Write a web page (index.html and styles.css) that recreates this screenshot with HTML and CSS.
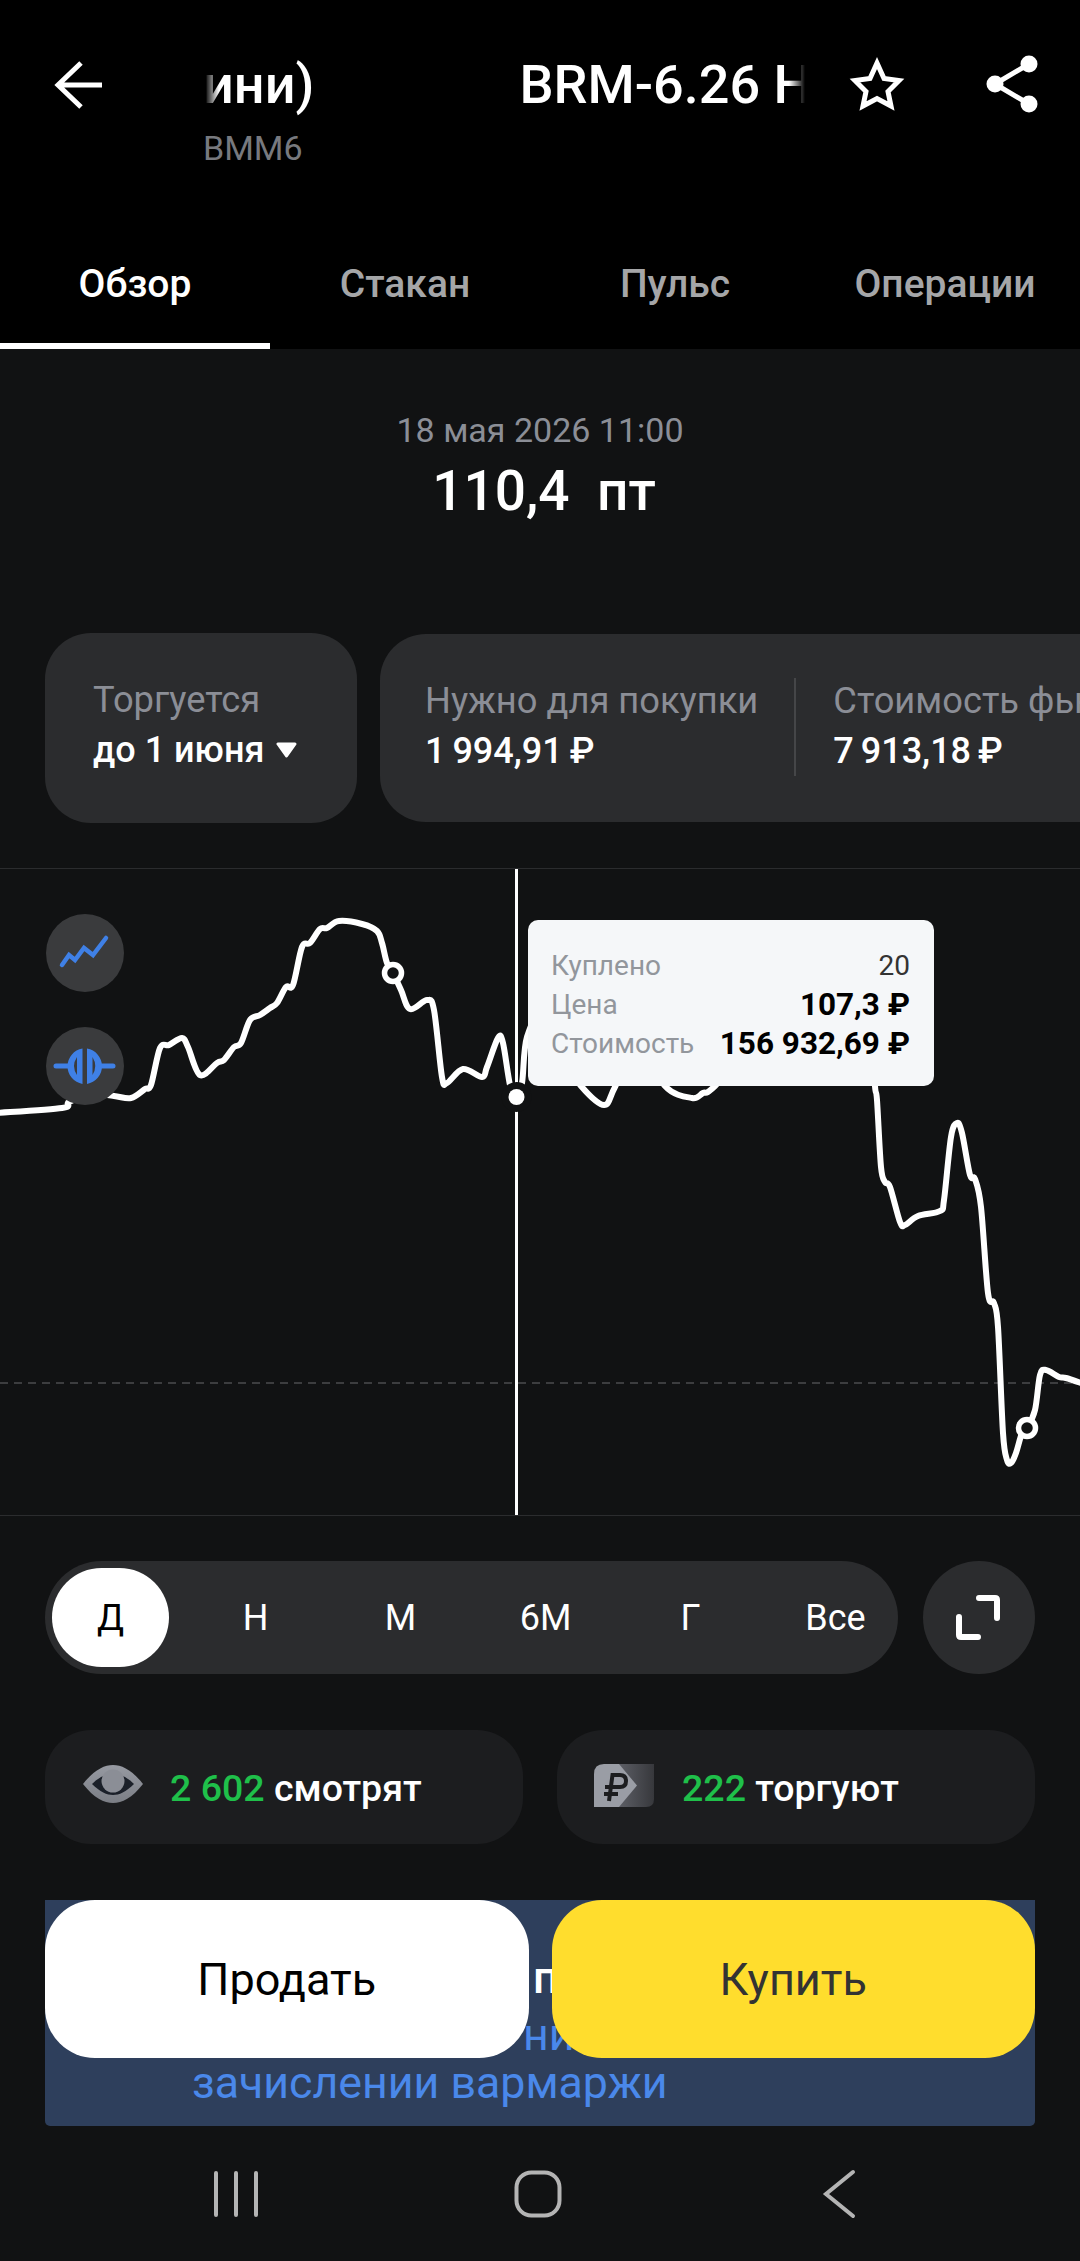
FILE: index.html
```html
<!DOCTYPE html>
<html lang="ru">
<head>
  <meta charset="UTF-8">
  <meta name="viewport" content="width=device-width, initial-scale=1.0">
  <title>BRM-6.26</title>
  <link rel="stylesheet" href="styles.css">
</head>
<body>
  <header class="top">
    <div class="title-row">
      <svg class="icon-back" viewBox="45 55 70 60"><path d="M102 85H58M81 63 58 85l23 22" /></svg>
      <div class="title-col">
        <div class="title-clip"><span class="title-prev">ини)</span><span>BRM-6.26 Н</span></div>
        <div class="ticker">BMM6</div>
      </div>
      <svg class="icon-star" viewBox="842 50 70 70"><path d="M877 63 884 78.500 899 80.500 888 91.500 891 106 877 98.500 863 106 866 91.500 855 80.500 870 78.500Z" /></svg>
      <svg class="icon-share" viewBox="980 50 65 70">
        <path d="M1029 64 995 84 1029 104" />
        <circle cx="1029" cy="64" r="8.500" /><circle cx="995" cy="84" r="8.500" /><circle cx="1029" cy="104" r="8.500" />
      </svg>
    </div>
    <nav class="tabs">
      <div class="tab active">Обзор</div>
      <div class="tab">Стакан</div>
      <div class="tab">Пульс</div>
      <div class="tab">Операции</div>
    </nav>
  </header>

  <section class="quote">
    <div class="quote-date">18 мая 2026 11:00</div>
    <div class="quote-price">110,4&nbsp; пт</div>
  </section>

  <section class="cards">
    <div class="card card-short">
      <div class="card-label">Торгуется</div>
      <div class="card-value">до 1 июня
        <svg class="caret" viewBox="0 0 21 16"><path d="M2 2H19L10.500 14Z" /></svg>
      </div>
    </div>
    <div class="card card-long">
      <div class="card-col">
        <div class="card-label">Нужно для покупки</div>
        <div class="card-value">1 994,91 ₽</div>
      </div>
      <div class="card-col card-col-last">
        <div class="card-label">Стоимость фьючерса</div>
        <div class="card-value">7 913,18 ₽</div>
      </div>
    </div>
  </section>

  <section class="chart">
    <svg class="chart-svg" viewBox="0 869 1080 646">
      <line class="chart-level" x1="0" y1="1383" x2="1080" y2="1383" />
      <path id="chart-line" class="chart-line" d="" />
      <line class="chart-cross" x1="516.500" y1="869" x2="516.500" y2="1515" />
      <circle class="chart-gap" cx="516.500" cy="1097" r="15" />
      <circle class="chart-dot" cx="516.500" cy="1097" r="8" />
      <circle class="chart-mark" cx="393" cy="973" r="8.500" />
      <circle class="chart-mark" cx="1027" cy="1428" r="8.500" />
    </svg>
    <button class="chart-btn chart-btn-line">
      <svg viewBox="0 0 78 78"><path d="M16 51 23 41 29 46 38 34 47 41 60 24" /></svg>
    </button>
    <button class="chart-btn chart-btn-marks">
      <svg viewBox="0 0 78 78">
        <path class="marks-stem" d="M10 39H22M56 39H67" />
        <path fill-rule="evenodd" d="M36.500 21.500A18 18 0 0 0 36.500 57ZM31 30Q25 39 31 48Z" />
        <path fill-rule="evenodd" d="M41 21.500A18 18 0 0 1 41 57ZM46.500 30Q52 39 46.500 48Z" />
      </svg>
    </button>
    <div class="tooltip">
      <div class="tip-label">Куплено</div><div class="tip-count">20</div>
      <div class="tip-label">Цена</div><div class="tip-value">107,3 ₽</div>
      <div class="tip-label">Стоимость</div><div class="tip-value">156 932,69 ₽</div>
    </div>
  </section>

  <section class="periods">
    <div class="period-bar">
      <div class="period active">Д</div>
      <div class="period">Н</div>
      <div class="period">М</div>
      <div class="period">6М</div>
      <div class="period">Г</div>
      <div class="period">Все</div>
    </div>
    <button class="expand">
      <svg viewBox="0 0 112 113"><path d="M56 37H72Q74 37 74 39V57M36 56V74Q36 76 38 76H55" /></svg>
    </button>
  </section>

  <section class="stats">
    <div class="stat">
      <svg class="icon-eye" viewBox="0 0 62 38">
        <defs>
          <linearGradient id="eye-fill" x1="0" y1="0" x2="0" y2="1">
            <stop offset="0" stop-color="#979aa2" />
            <stop offset="1" stop-color="#7b7e85" />
          </linearGradient>
        </defs>
        <path fill="url(#eye-fill)" d="M1 19C12 5 22 0 31 0S50 5 61 19C50 33 40 38 31 38S12 33 1 19Z" />
        <path fill="#1b2029" d="M10 19C18 11 25 9 31 9S44 11 52 19C44 27 37 30 31 30S18 27 10 19Z" />
        <circle fill="#8b8e96" cx="31" cy="16" r="11.500" />
      </svg>
      <span class="stat-text"><span class="stat-num">2 602</span> смотрят</span>
    </div>
    <div class="stat stat-trade">
      <svg class="icon-ruble" viewBox="0 0 60 43">
        <defs>
          <linearGradient id="tag-fill" x1="0" y1="0" x2="1" y2="0">
            <stop offset="0.400" stop-color="#5d5f66" />
            <stop offset="1" stop-color="#37383c" />
          </linearGradient>
        </defs>
        <path fill="url(#tag-fill)" d="M10 0H60V35Q60 43 52 43H0Z" />
        <path fill="#9a9da5" d="M10 0H25L43 21.500 25 43H0V10Q0 0 10 0Z" />
        <path class="ruble-mark" d="M15 37 18.500 11H26Q32 11 32 17T26 23H11M10 30H24" />
      </svg>
      <span class="stat-text"><span class="stat-num">222</span> торгуют</span>
    </div>
  </section>

  <section class="banner">
    <div class="banner-title">п</div>
    <div class="banner-link banner-link-tail">ни</div>
    <div class="banner-link">зачислении вармаржи</div>
    <div class="actions">
      <button class="action action-sell">Продать</button>
      <button class="action action-buy">Купить</button>
    </div>
  </section>

  <nav class="system-nav">
    <svg viewBox="0 0 60 50"><path d="M10 4V46M30 4V46M50 4V46" /></svg>
    <svg viewBox="0 0 60 50"><rect x="8.500" y="3.500" width="43" height="43" rx="15" /></svg>
    <svg viewBox="0 0 60 50"><path d="M43 3 16 25 43 47" /></svg>
  </nav>

  <script src="chart.js"></script>
</body>
</html>
```

FILE: styles.css
```css
* {
  box-sizing: border-box;
}

body {
  margin: 0;
  width: 1080px;
  height: 2261px;
  overflow: hidden;
  background-color: #111213;
  color: #fff;
  font-family: Roboto, "Noto Sans", sans-serif;
}

button {
  border: none;
  padding: 0;
  font-family: inherit;
}

svg {
  display: block;
}

/* header */
.top {
  background-color: #000;
  height: 349px;
  display: flex;
  flex-direction: column;
  justify-content: space-between;
}

.title-row {
  display: flex;
  align-items: flex-start;
  padding: 50px 0 0 45px;
}

.icon-back {
  width: 70px;
  height: 60px;
  margin-top: 5px;
  fill: none;
  stroke: #fff;
  stroke-width: 5;
}

.title-col {
  width: 600px;
  margin-left: 90px;
}

.title-clip {
  display: flex;
  gap: 205px;
  overflow: hidden;
  white-space: nowrap;
  font-size: 54px;
  font-weight: 500;
  line-height: 70px;
  mask-image: linear-gradient(90deg, transparent 0, #000 14px, #000 584px, transparent 600px);
}

.title-prev {
  margin-left: -2px;
}

.ticker {
  margin: 8px 0 0 -2px;
  font-size: 34px;
  line-height: 40px;
  color: #77797e;
}

.icon-star {
  width: 70px;
  height: 70px;
  margin-left: 37px;
  fill: none;
  stroke: #fff;
  stroke-width: 5;
}

.icon-share {
  width: 65px;
  height: 70px;
  margin-left: 68px;
  fill: #fff;
  stroke: #fff;
  stroke-width: 5;
}

.icon-share path {
  fill: none;
}

.icon-share circle {
  stroke: none;
}

.tabs {
  display: grid;
  grid-template-columns: repeat(4, 270px);
}

.tab {
  height: 115px;
  padding-bottom: 9px;
  border-bottom: 6px solid transparent;
  display: flex;
  align-items: center;
  justify-content: center;
  font-size: 39px;
  font-weight: 500;
  color: #a5a6a8;
}

.tab.active {
  color: #fff;
  border-bottom-color: #fff;
}

/* price */
.quote {
  height: 284px;
  padding-top: 63px;
  text-align: center;
}

.quote-date {
  font-size: 34px;
  line-height: 36px;
  color: #8b8e96;
}

.quote-price {
  margin: 8px 0 0 8px;
  font-size: 55px;
  font-weight: 500;
  line-height: 70px;
}

/* info cards */
.cards {
  display: flex;
  align-items: center;
  gap: 23px;
  height: 190px;
  padding-left: 45px;
  overflow: hidden;
}

.card {
  background-color: #2b2c2e;
  border-radius: 46px;
  flex-shrink: 0;
}

.card-short {
  width: 312px;
  height: 190px;
  padding: 44px 0 0 48px;
}

.card-long {
  display: flex;
  height: 188px;
  padding: 44px 0 0 45px;
  border-radius: 46px 0 0 46px;
}

.card-col {
  padding-right: 36px;
  height: 98px;
  white-space: nowrap;
}

.card-col-last {
  padding-left: 37px;
  border-left: 2px solid #454648;
}

.card-label {
  font-size: 36.300px;
  line-height: 46px;
  color: #8b8e96;
}

.card-value {
  display: flex;
  align-items: center;
  gap: 12px;
  margin-top: 4px;
  font-size: 36px;
  font-weight: 500;
  line-height: 46px;
}

.card-long .card-value {
  word-spacing: -2px;
}

.caret {
  width: 21px;
  height: 16px;
  fill: #fff;
  stroke: #fff;
  stroke-width: 3;
  stroke-linejoin: round;
}

/* chart */
.chart {
  position: relative;
  margin-top: 45px;
  border-top: 1px solid #2b2c2e;
  border-bottom: 1px solid #2b2c2e;
}

.chart-svg {
  width: 1080px;
  height: 646px;
}

.chart-level {
  stroke: #3c3d3f;
  stroke-width: 2;
  stroke-dasharray: 8 6;
}

.chart-line {
  fill: none;
  stroke: #fff;
  stroke-width: 6;
  stroke-linejoin: round;
  stroke-linecap: round;
}

.chart-cross {
  stroke: #fff;
  stroke-width: 3;
}

.chart-gap {
  fill: #111213;
}

.chart-dot {
  fill: #fff;
}

.chart-mark {
  fill: #111213;
  stroke: #fff;
  stroke-width: 5.500;
}

.chart-btn {
  position: absolute;
  left: 46px;
  width: 78px;
  height: 78px;
  border-radius: 50%;
  background-color: #3a3b3d;
}

.chart-btn-line {
  top: 45px;
}

.chart-btn-marks {
  top: 158px;
}

.chart-btn path {
  fill: #3f80e6;
}

.chart-btn-line path {
  fill: none;
  stroke: #3f80e6;
  stroke-width: 4.500;
  stroke-linecap: round;
}

.chart-btn .marks-stem {
  fill: none;
  stroke: #3f80e6;
  stroke-width: 5;
  stroke-linecap: round;
}

.tooltip {
  position: absolute;
  left: 528px;
  top: 51px;
  width: 406px;
  height: 166px;
  padding: 26px 24px 0 23px;
  border-radius: 10px;
  background-color: #f5f7f9;
  display: grid;
  grid-template-columns: auto 1fr;
  grid-auto-rows: 39px;
  align-items: center;
  font-size: 28px;
}

.tip-label {
  color: #92969c;
}

.tip-count {
  text-align: right;
  color: #333;
}

.tip-value {
  text-align: right;
  color: #000;
  font-size: 31.500px;
  font-weight: 700;
}

/* period switch */
.periods {
  display: flex;
  gap: 25px;
  margin: 45px 45px 0;
}

.period-bar {
  width: 853px;
  height: 113px;
  padding: 7px 4px 7px 7px;
  border-radius: 57px;
  background-color: #2b2c2e;
  display: grid;
  grid-template-columns: repeat(6, 117px);
  gap: 28px;
}

.period {
  display: flex;
  align-items: center;
  justify-content: center;
  border-radius: 50px;
  font-size: 36px;
}

.period.active {
  background-color: #fff;
  color: #000;
}

.expand {
  width: 112px;
  height: 113px;
  border-radius: 50%;
  background-color: #2b2c2e;
}

.expand path {
  fill: none;
  stroke: #fff;
  stroke-width: 6;
  stroke-linecap: round;
}

/* who is watching */
.stats {
  display: flex;
  gap: 34px;
  margin: 56px 45px 0;
}

.stat {
  flex: 1;
  height: 114px;
  padding-left: 37px;
  border-radius: 46px;
  background-color: #1c1d1f;
  display: flex;
  align-items: center;
  gap: 26px;
  font-size: 37.500px;
  font-weight: 500;
}

.stat-trade {
  gap: 28px;
}

.stat-text {
  margin-top: 2px;
}

.stat-num {
  color: #1fc04a;
}

.icon-eye {
  width: 62px;
  height: 38px;
  margin-top: -6px;
}

.icon-ruble {
  width: 60px;
  height: 43px;
  margin-top: -4px;
}

.ruble-mark {
  fill: none;
  stroke: #1c1d1f;
  stroke-width: 4;
}

/* banner under the buttons */
.banner {
  position: relative;
  height: 226px;
  margin: 56px 45px 0;
  padding-top: 53px;
  border-radius: 0 0 5px 5px;
  background-color: #2e3f5c;
}

.banner-title {
  padding-left: 488px;
  font-size: 45px;
  font-weight: 500;
  line-height: 50px;
}

.banner-link {
  padding-left: 147px;
  font-size: 44.700px;
  line-height: 48px;
  color: #4a88ea;
}

.banner-link-tail {
  margin-top: 8px;
  padding-left: 478px;
}

.actions {
  position: absolute;
  left: 0;
  right: 0;
  top: 0;
  display: flex;
  gap: 23px;
}

.action {
  flex: 1;
  height: 158px;
  border-radius: 50px;
  font-size: 45px;
}

.action-sell {
  background-color: #fff;
  color: #000;
}

.action-buy {
  background-color: #ffdd2d;
  color: #333;
}

/* android buttons */
.system-nav {
  height: 135px;
  padding-right: 5px;
  display: flex;
  align-items: center;
  justify-content: center;
  gap: 242px;
}

.system-nav svg {
  width: 60px;
  height: 50px;
  fill: none;
  stroke: #b4b4b4;
  stroke-width: 4;
  stroke-linecap: round;
}
```

FILE: chart.js
```js
// price points of the day, in page pixels
const points = [
  [-4, 1113], [62, 1108], [69, 1102], [90, 1094], [114, 1096], [131, 1098], [145, 1089], [151, 1085],
  [160, 1048], [169, 1045], [182, 1038], [188, 1047], [200, 1075], [217, 1063], [224, 1060], [234, 1047],
  [241, 1043], [250, 1020], [260, 1015], [270, 1008], [277, 1003], [286, 987], [293, 985], [302, 947],
  [310, 943], [320, 929], [327, 928], [339, 921], [362, 924], [377, 931], [382, 943], [387, 963],
  [393, 973], [401, 990], [410, 1009], [427, 1000], [434, 1010], [442, 1077], [447, 1083], [463, 1069],
  [482, 1077], [487, 1067], [498, 1038], [503, 1043], [510, 1085], [516, 1097], [522, 1083], [527, 1037],
  [545, 1010], [565, 1060], [581, 1086], [604, 1105], [615, 1087], [640, 1040], [665, 1086], [692, 1098],
  [703, 1093], [715, 1086], [770, 1030], [850, 990], [872, 1030], [875, 1086], [877, 1100], [881, 1167],
  [885, 1182], [890, 1187], [900, 1222], [905, 1225], [918, 1216], [940, 1211], [944, 1200], [951, 1137],
  [957, 1123], [962, 1133], [970, 1175], [975, 1179], [981, 1207], [988, 1293], [994, 1303], [998, 1327],
  [1003, 1433], [1007, 1460], [1011, 1463], [1016, 1453], [1022, 1433], [1027, 1428], [1035, 1410],
  [1040, 1375], [1046, 1370], [1059, 1377], [1066, 1378], [1084, 1384]
];

// smooth the line with catmull-rom segments
let d = `M${points[0][0]} ${points[0][1]}`;
for (let i = 0; i < points.length - 1; i++) {
  const p0 = points[Math.max(i - 1, 0)];
  const p1 = points[i];
  const p2 = points[i + 1];
  const p3 = points[Math.min(i + 2, points.length - 1)];
  const c1x = p1[0] + (p2[0] - p0[0]) / 6;
  const c1y = p1[1] + (p2[1] - p0[1]) / 6;
  const c2x = p2[0] - (p3[0] - p1[0]) / 6;
  const c2y = p2[1] - (p3[1] - p1[1]) / 6;
  d += `C${c1x} ${c1y} ${c2x} ${c2y} ${p2[0]} ${p2[1]}`;
}
document.getElementById('chart-line').setAttribute('d', d);
```
